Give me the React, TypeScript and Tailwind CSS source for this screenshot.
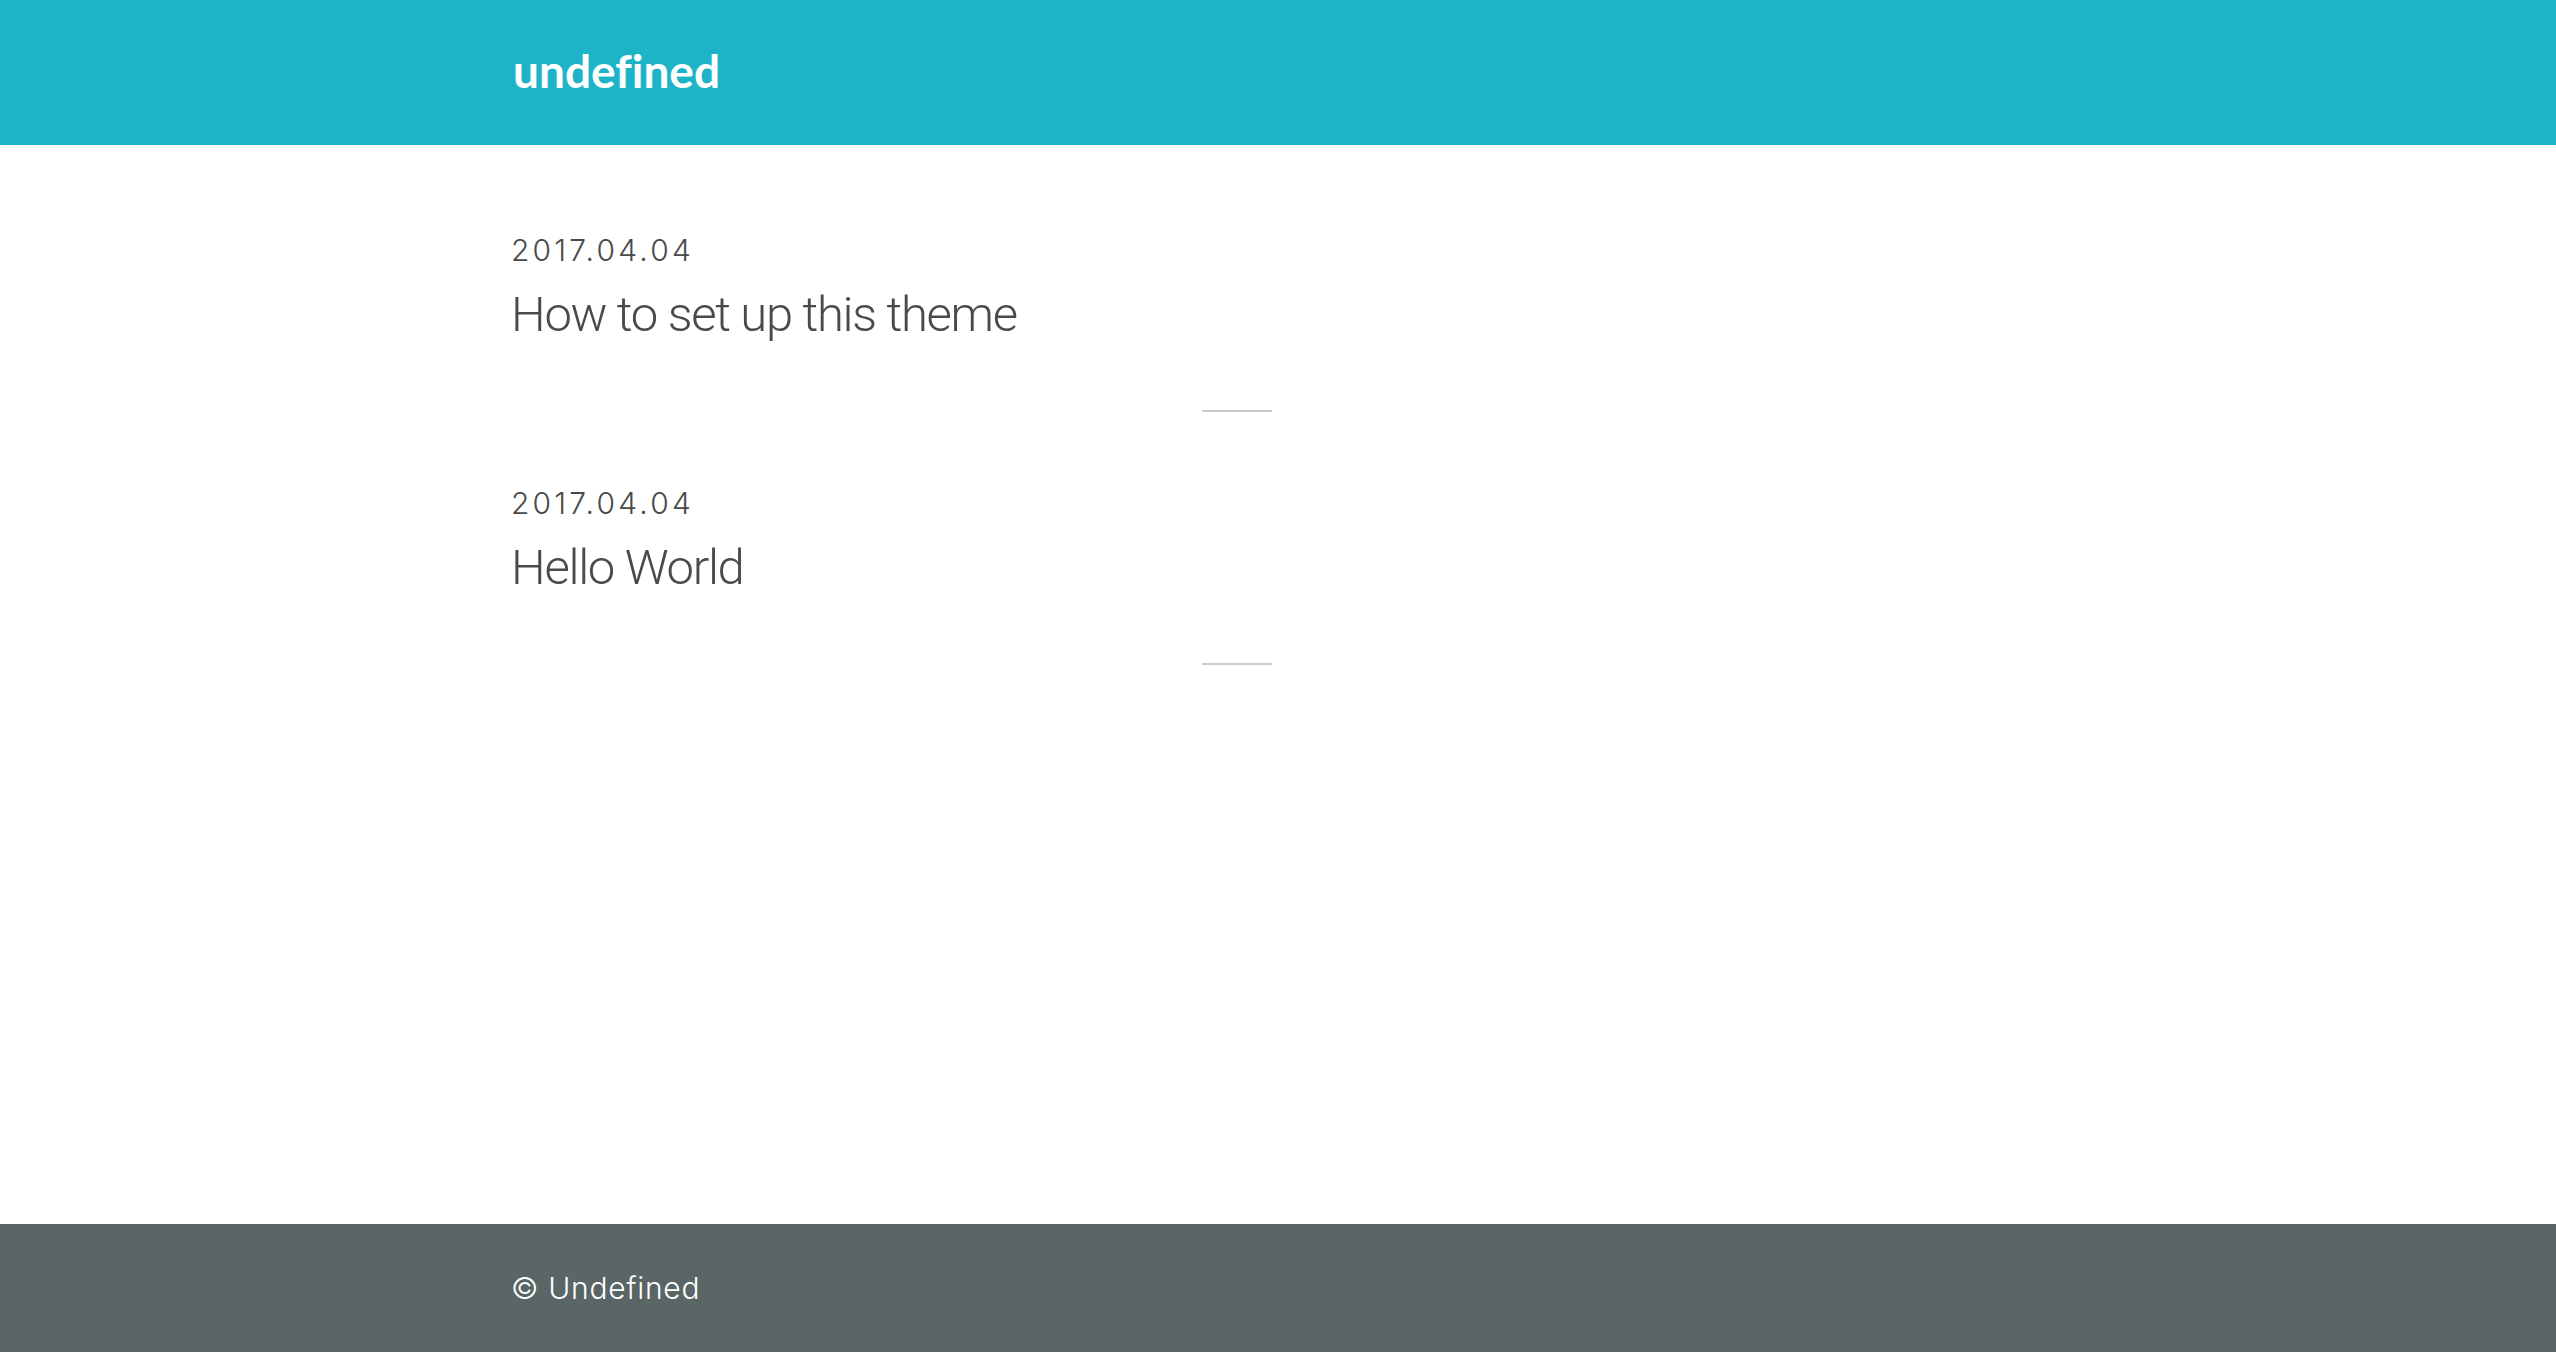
const posts = [
  { date: '2017.04.04', title: 'How to set up this theme' },
  { date: '2017.04.04', title: 'Hello World' },
];

function Header() {
  return (
    <header className="h-[145px] bg-[#1eb4c8] pt-[48px]">
      <div className="mx-auto w-[1534px]">
        <a
          href="#"
          className="block text-white text-[46px] font-bold leading-none pl-[2px] [font-variant-ligatures:none] [font-family:Lato,'Open_Sans',sans-serif]"
        >
          undefined
        </a>
      </div>
    </header>
  );
}

function PostItem({ date, title }: { date: string; title: string }) {
  return (
    <article>
      <div className="text-[30px] leading-[36px] font-light tracking-[3.2px] text-[#4a4a4a] [font-family:Inter,sans-serif]">
        {date}
      </div>
      <h2 className="mt-[18px] text-[49px] leading-[58px] font-light tracking-[-1.3px] text-[#4a4a4a] [font-family:Roboto,sans-serif]">
        {title}
      </h2>
      {/* Divider */}
      <div className="mt-[66px] mb-[73px] ml-[691px] w-[70px] h-[2px] bg-[#cccccc]" />
    </article>
  );
}

export default function App() {
  return (
    <div className="min-h-screen flex flex-col bg-white [font-family:Inter,'Liberation_Sans',sans-serif]">
      <Header />
      <main className="flex-1 pt-[87px]">
        <div className="mx-auto w-[1534px]">
          {posts.map((post, i) => (
            <PostItem key={i} date={post.date} title={post.title} />
          ))}
        </div>
      </main>
      <footer className="h-[128px] bg-[#5a6566] flex items-center">
        <div className="mx-auto w-[1534px] text-white text-[30px] font-light tracking-[0.7px]">
          © Undefined
        </div>
      </footer>
    </div>
  );
}
